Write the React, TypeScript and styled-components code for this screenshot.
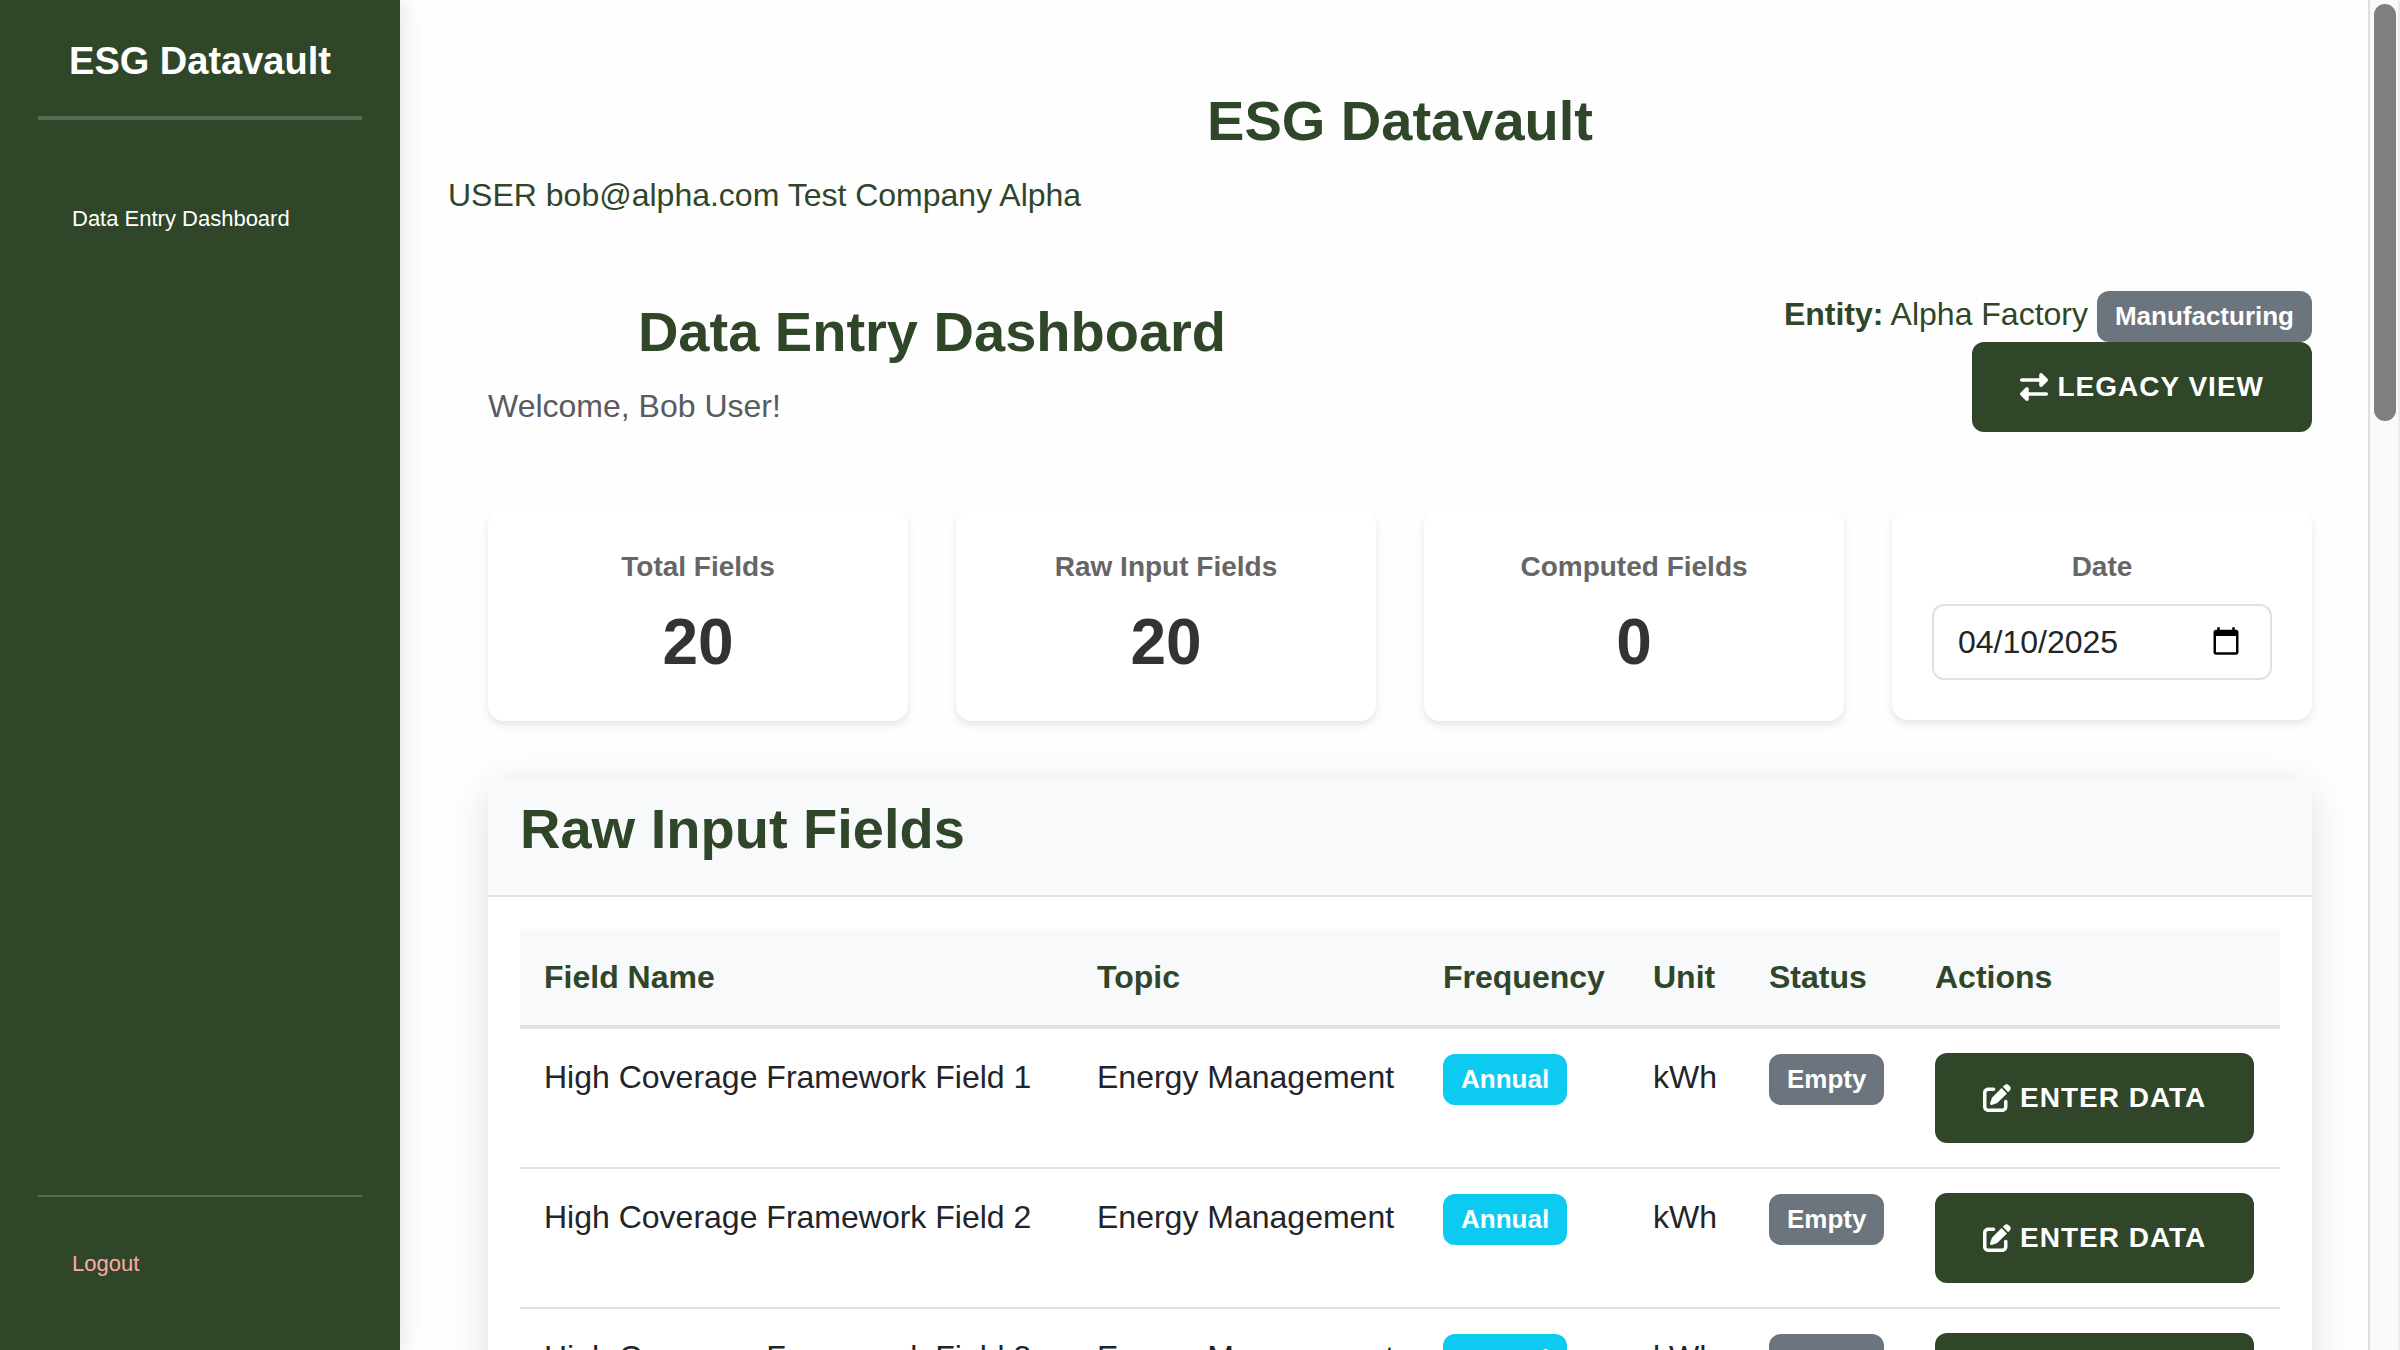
import React, { useState } from "react";
import styled, { createGlobalStyle } from "styled-components";
import { FaPenToSquare } from "react-icons/fa6";

const green = "#2f4629";

const GlobalStyle = createGlobalStyle`
  *, *::before, *::after { box-sizing: border-box; }
  html, body { height: 100%; }
  body {
    margin: 0;
    overflow: hidden;
    background: #fefefe;
    color: ${green};
    font: 32px/48px Arial, "Liberation Sans", sans-serif;
  }
  h1, h2, h3, p { margin: 0; }
`;

const Shell = styled.div`
  display: flex;
  height: 100vh;
`;

const Sidebar = styled.aside`
  display: flex;
  flex-direction: column;
  flex: 0 0 400px;
  padding: 38px 38px 53px;
  background: ${green};
  box-shadow: 4px 0 20px rgba(0, 0, 0, 0.1);
  z-index: 1;
`;

const Brand = styled.h3`
  padding-bottom: 32px;
  border-bottom: 4px solid rgba(255, 255, 255, 0.2);
  color: #fff;
  font-size: 38px;
  line-height: 46px;
  text-align: center;
`;

const SideNav = styled.nav`
  flex: 1;
  padding: 82px 34px 0;
`;

const SideFooter = styled.div`
  padding: 50px 34px 16px;
  border-top: 2px solid rgba(255, 255, 255, 0.2);
`;

const SideLink = styled.a<{ $danger?: boolean }>`
  display: block;
  color: ${(p) => (p.$danger ? "#ffa8a8" : "#fff")};
  font-size: 22px;
  line-height: 34px;
  text-decoration: none;
  white-space: nowrap;
`;

const Main = styled.main`
  flex: 1;
  min-width: 0;
  padding: 88px 16px 0 48px;
  overflow-x: hidden;
  overflow-y: auto;
  scrollbar-width: none;
`;

const Heading = styled.h1<{ $left?: boolean }>`
  margin-bottom: 17px;
  font-size: 56px;
  line-height: 66px;
  text-align: ${(p) => (p.$left ? "left" : "center")};
`;

const Content = styled.div`
  padding: 71px 40px 0;
`;

const Intro = styled.div`
  display: grid;
  grid-template-columns: 1fr 1fr;
  align-items: end;
  gap: 48px;
`;

const Welcome = styled.p`
  padding-bottom: 2px;
  color: #585b5f;
`;

const EntityColumn = styled.div`
  display: flex;
  flex-direction: column;
  align-items: flex-end;
`;

const Badge = styled.span<{ $tone: "info" | "muted" }>`
  display: inline-block;
  padding: 12px 18px;
  border-radius: 12px;
  background: ${(p) => (p.$tone === "info" ? "#0dcaf0" : "#6c757d")};
  color: #fff;
  font-size: 26px;
  font-weight: 700;
  line-height: 27px;
`;

const Button = styled.button`
  display: inline-flex;
  align-items: center;
  gap: 9px;
  height: 90px;
  padding: 0 48px;
  border: 0;
  border-radius: 12px;
  background: ${green};
  color: #fff;
  font: 700 28px/42px Arial, "Liberation Sans", sans-serif;
  letter-spacing: 1px;
  text-transform: uppercase;
  white-space: nowrap;
  cursor: pointer;
`;

const Stats = styled.div`
  display: grid;
  grid-template-columns: repeat(4, 1fr);
  align-items: start;
  gap: 48px;
  margin-top: 78px;
`;

const StatCard = styled.section`
  padding: 40px;
  border-radius: 16px;
  background: #fff;
  box-shadow: 0 4px 8px rgba(0, 0, 0, 0.1);
  text-align: center;
`;

const StatLabel = styled.label`
  display: block;
  margin-bottom: 20px;
  color: #666;
  font-size: 28px;
  font-weight: 700;
  line-height: 34px;
`;

const StatValue = styled.output`
  display: block;
  color: #333;
  font-size: 64px;
  font-weight: 700;
  line-height: 77px;
`;

const DateInput = styled.input`
  display: block;
  width: 100%;
  height: 76px;
  padding: 12px 24px;
  border: 2px solid #dee2e6;
  border-radius: 12px;
  background: #fff;
  color: #212529;
  font: 32px/48px Arial, "Liberation Sans", sans-serif;

  &::-webkit-datetime-edit-month-field,
  &::-webkit-datetime-edit-day-field,
  &::-webkit-datetime-edit-year-field {
    padding: 0;
  }

  &::-webkit-calendar-picker-indicator {
    width: 32px;
    height: 32px;
    padding: 4px;
  }
`;

const Panel = styled.section`
  margin-top: 58px;
  border-radius: 16px;
  background: #fff;
  box-shadow: 0 8px 40px rgba(0, 0, 0, 0.12);
`;

const PanelHeader = styled.header`
  padding: 17px 32px 16px;
  border-bottom: 2px solid #dee2e6;
  border-radius: 16px 16px 0 0;
  background: #f8f9fb;
`;

const PanelBody = styled.div`
  padding: 32px;
`;

const Table = styled.table`
  width: 100%;
  border-collapse: separate;
  border-spacing: 0;
  color: #212529;
  text-align: left;
`;

const HeadCell = styled.th<{ $width: number }>`
  width: ${(p) => p.$width}px;
  padding: 24px;
  border-bottom: 4px solid #dee2e6;
  background: #f8f9fb;
  color: ${green};
  white-space: nowrap;
`;

const Cell = styled.td`
  padding: 24px;
  border-bottom: 2px solid #dee2e6;
  vertical-align: top;
  white-space: nowrap;

  & > button { display: flex; }
`;

const ScrollTrack = styled.div`
  flex: 0 0 32px;
  padding: 4px 2px 0 4px;
  border-left: 2px solid #dfdfdf;
  border-right: 2px solid #ececec;
  background: #fafafa;
`;

const ScrollThumb = styled.div`
  width: 22px;
  height: 417px;
  border-radius: 11px;
  background: #7f7f7f;
`;

const SwapIcon = () => (
  <svg width="28" height="28" viewBox="0 0 512 512" fill="currentColor" aria-hidden="true">
    <path d="M32 96l320 0V32c0-12.900 7.800-24.600 19.800-29.600s25.700-2.200 34.900 6.900l96 96c6 6 9.400 14.100 9.400 22.600s-3.400 16.600-9.400 22.600l-96 96c-9.200 9.200-22.900 11.900-34.900 6.900s-19.800-16.600-19.800-29.600V160L32 160c-17.700 0-32-14.300-32-32s14.300-32 32-32zM480 352c17.700 0 32 14.300 32 32s-14.300 32-32 32H160v64c0 12.900-7.800 24.600-19.800 29.600s-25.700 2.200-34.900-6.900l-96-96c-6-6-9.400-14.100-9.400-22.600s3.400-16.600 9.400-22.600l96-96c9.200-9.200 22.900-11.900 34.900-6.900s19.800 16.600 19.800 29.600l0 64H480z" />
  </svg>
);

const columns = [
  { title: "Field Name", width: 553 },
  { title: "Topic", width: 346 },
  { title: "Frequency", width: 210 },
  { title: "Unit", width: 116 },
  { title: "Status", width: 166 },
  { title: "Actions", width: 369 },
];

const fields = [1, 2, 3].map((n) => ({
  name: `High Coverage Framework Field ${n}`,
  topic: "Energy Management",
  frequency: "Annual",
  unit: "kWh",
  status: "Empty",
}));

const stats = [
  { id: "total", label: "Total Fields", value: 20 },
  { id: "raw", label: "Raw Input Fields", value: 20 },
  { id: "computed", label: "Computed Fields", value: 0 },
];

export default function App() {
  const [date, setDate] = useState("2025-04-10");

  return (
    <>
      <GlobalStyle />
      <Shell>
        <Sidebar>
          <Brand>ESG Datavault</Brand>
          <SideNav>
            <SideLink href="#dashboard">Data Entry Dashboard</SideLink>
          </SideNav>
          <SideFooter>
            <SideLink href="#logout" $danger>Logout</SideLink>
          </SideFooter>
        </Sidebar>
        <Main>
          <Heading>ESG Datavault</Heading>
          <p>USER bob@alpha.com Test Company Alpha</p>
          <Content>
            <Intro>
              <div>
                <Heading as="h2">Data Entry Dashboard</Heading>
                <Welcome>Welcome, Bob User!</Welcome>
              </div>
              <EntityColumn>
                <div>
                  <strong>Entity:</strong> Alpha Factory <Badge $tone="muted">Manufacturing</Badge>
                </div>
                <Button type="button"><SwapIcon />Legacy View</Button>
              </EntityColumn>
            </Intro>
            <Stats>
              {stats.map((s) => (
                <StatCard key={s.id}>
                  <StatLabel htmlFor={s.id}>{s.label}</StatLabel>
                  <StatValue id={s.id}>{s.value}</StatValue>
                </StatCard>
              ))}
              <StatCard>
                <StatLabel htmlFor="date">Date</StatLabel>
                <DateInput id="date" type="date" value={date} onChange={(e) => setDate(e.target.value)} />
              </StatCard>
            </Stats>
            <Panel>
              <PanelHeader>
                <Heading as="h2" $left>Raw Input Fields</Heading>
              </PanelHeader>
              <PanelBody>
                <Table>
                  <thead>
                    <tr>
                      {columns.map((c) => (
                        <HeadCell key={c.title} scope="col" $width={c.width}>{c.title}</HeadCell>
                      ))}
                    </tr>
                  </thead>
                  <tbody>
                    {fields.map((f) => (
                      <tr key={f.name}>
                        <Cell>{f.name}</Cell>
                        <Cell>{f.topic}</Cell>
                        <Cell><Badge $tone="info">{f.frequency}</Badge></Cell>
                        <Cell>{f.unit}</Cell>
                        <Cell><Badge $tone="muted">{f.status}</Badge></Cell>
                        <Cell><Button type="button"><FaPenToSquare size={28} />Enter Data</Button></Cell>
                      </tr>
                    ))}
                  </tbody>
                </Table>
              </PanelBody>
            </Panel>
          </Content>
        </Main>
        <ScrollTrack aria-hidden="true"><ScrollThumb /></ScrollTrack>
      </Shell>
    </>
  );
}
